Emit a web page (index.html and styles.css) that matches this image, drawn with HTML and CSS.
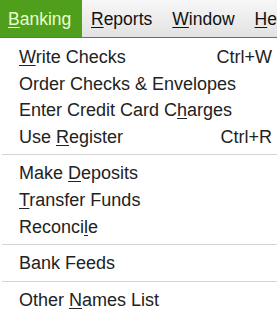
FILE: index.html
```html
<!DOCTYPE html>
<html>
<head>
<meta charset="utf-8">
<link rel="stylesheet" href="styles.css">
</head>
<body>
<div class="menubar">
  <div class="top active"><u>B</u>anking</div>
  <div class="top"><u>R</u>eports</div>
  <div class="top"><u>W</u>indow</div>
  <div class="top"><u>H</u>elp</div>
</div>
<div class="menu">
  <div class="item"><span><u>W</u>rite Checks</span><span class="key">Ctrl+W</span></div>
  <div class="item"><span>Order Checks &amp; Envelopes</span></div>
  <div class="item"><span>Enter Credit Card C<u>h</u>arges</span></div>
  <div class="item"><span>Use <u>R</u>egister</span><span class="key">Ctrl+R</span></div>
  <div class="sep"></div>
  <div class="item"><span>Make <u>D</u>eposits</span></div>
  <div class="item"><span><u>T</u>ransfer Funds</span></div>
  <div class="item"><span>Reconci<u>l</u>e</span></div>
  <div class="sep"></div>
  <div class="item"><span>Bank Feeds</span></div>
  <div class="sep"></div>
  <div class="item"><span>Other <u>N</u>ames List</span></div>
</div>
</body>
</html>
```
FILE: styles.css
```css
html, body {
  margin: 0;
  padding: 0;
  background: #ffffff;
  overflow: hidden;
}
body {
  width: 277px;
  height: 315px;
  font-family: "Liberation Sans", Arial, sans-serif;
  color: #222222;
}
u {
  text-decoration-thickness: 1px;
  text-underline-offset: 2px;
}
.menubar {
  display: flex;
  height: 37px;
  background: linear-gradient(#f7f7f7, #e2e2e2);
  border-bottom: 1px solid #6d6d6d;
  white-space: nowrap;
  overflow: hidden;
}
.top {
  font-size: 17.5px;
  line-height: 38px;
  padding: 0 10px;
  color: #111111;
  flex: none;
}
.active {
  background: #4f9f1c;
  color: #e8ffd0;
  padding: 0 0 0 8px;
  width: 74px;
}
.top:nth-child(2) {
  padding-left: 9px;
}
.menu {
  padding-top: 6px;
}
.item {
  display: flex;
  justify-content: space-between;
  font-size: 18px;
  line-height: 26.6px;
  padding: 0 5px 0 19px;
  white-space: nowrap;
}
.sep {
  height: 1px;
  background: #d4d4d4;
  margin: 4px 0 5px 2px;
}
```
